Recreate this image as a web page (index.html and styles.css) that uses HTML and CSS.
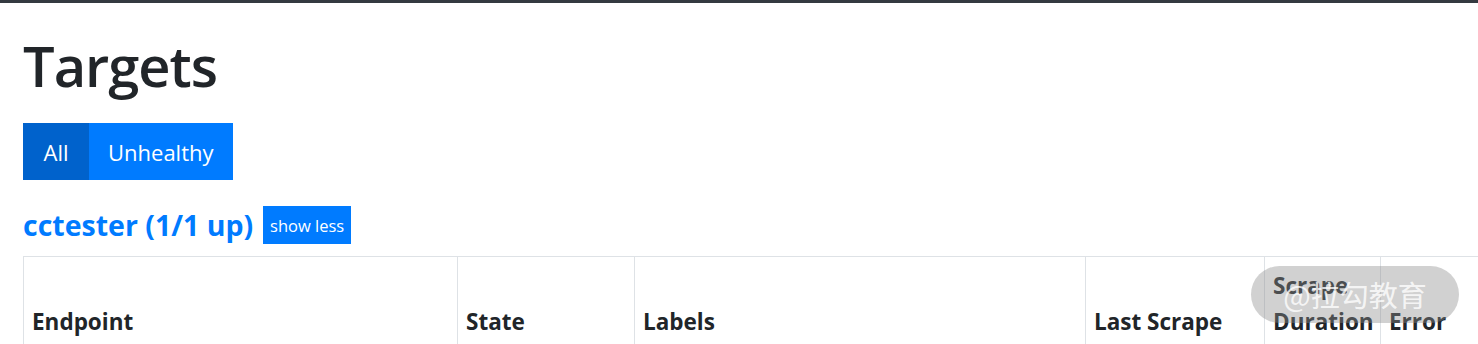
FILE: index.html
```html
<!DOCTYPE html>
<html>
<head>
<meta charset="utf-8">
<link rel="stylesheet" href="styles.css">
</head>
<body>
<div class="topbar"></div>
<main class="page">
  <h1 class="title">Targets</h1>
  <div class="btn-group">
    <button class="btn btn-active">All</button>
    <button class="btn">Unhealthy</button>
  </div>
  <div class="pool-head">
    <a class="pool-link" href="#">cctester (1/1 up)</a>
    <button class="btn-xs">show less</button>
  </div>
  <table class="targets">
    <thead>
      <tr>
        <th class="c-endpoint">Endpoint</th>
        <th class="c-state">State</th>
        <th class="c-labels">Labels</th>
        <th class="c-last">Last Scrape</th>
        <th class="c-dur">Scrape Duration</th>
        <th class="c-err">Error</th>
      </tr>
    </thead>
  </table>
</main>
<div class="watermark">@拉勾教育</div>
</body>
</html>
```
FILE: styles.css
```css
html, body {
  margin: 0;
  padding: 0;
  background: #fff;
  overflow: hidden;
}
body {
  font-family: "Open Sans", "Noto Sans", "Noto Sans CJK SC", sans-serif;
  color: #212529;
  width: 1478px;
  height: 344px;
  position: relative;
}
.topbar {
  height: 3px;
  background: #343a40;
}
.page {
  padding: 0 0 0 23px;
}
.title {
  font-size: 56px;
  font-weight: 600;
  line-height: 1.2;
  margin: 29px 0 24px 0;
  letter-spacing: -1px;
}
.btn-group {
  display: flex;
}
.btn {
  font-family: inherit;
  font-size: 22px;
  color: #fff;
  background: #007bff;
  border: none;
  height: 57px;
  padding: 0 19px;
  margin: 0;
}
.btn-active {
  background: #0062cc;
  width: 66px;
  padding: 0;
}
.pool-head {
  display: flex;
  align-items: center;
  margin-top: 26px;
  gap: 10px;
}
.pool-link {
  color: #007bff;
  font-weight: 700;
  font-size: 28.5px;
  text-decoration: none;
}
.btn-xs {
  font-family: inherit;
  font-size: 16.5px;
  color: #fff;
  background: #007bff;
  border: none;
  height: 38px;
  padding: 0 7px;
  margin: 0;
}
.targets {
  margin-top: 12px;
  border-collapse: collapse;
  width: 1577px;
  table-layout: fixed;
}
.targets th {
  border: 1px solid #dee2e6;
  border-bottom-width: 2px;
  vertical-align: bottom;
  text-align: left;
  font-size: 22.5px;
  line-height: 36px;
  font-weight: 700;
  padding: 10px 8px 9px 8px;
  height: 73px;
}
.c-endpoint { width: 417px; }
.c-state { width: 160px; }
.c-labels { width: 434px; }
.c-last { width: 162px; }
.c-dur { width: 99px; }
.c-err { width: 203px; }
.watermark {
  position: absolute;
  left: 1251px;
  top: 266px;
  width: 208px;
  height: 57px;
  border-radius: 29px;
  background: rgba(140, 140, 140, 0.4);
  color: rgba(255, 255, 255, 0.8);
  font-size: 29px;
  line-height: 57px;
  text-align: center;
  font-family: "Noto Sans CJK SC", sans-serif;
}
```
